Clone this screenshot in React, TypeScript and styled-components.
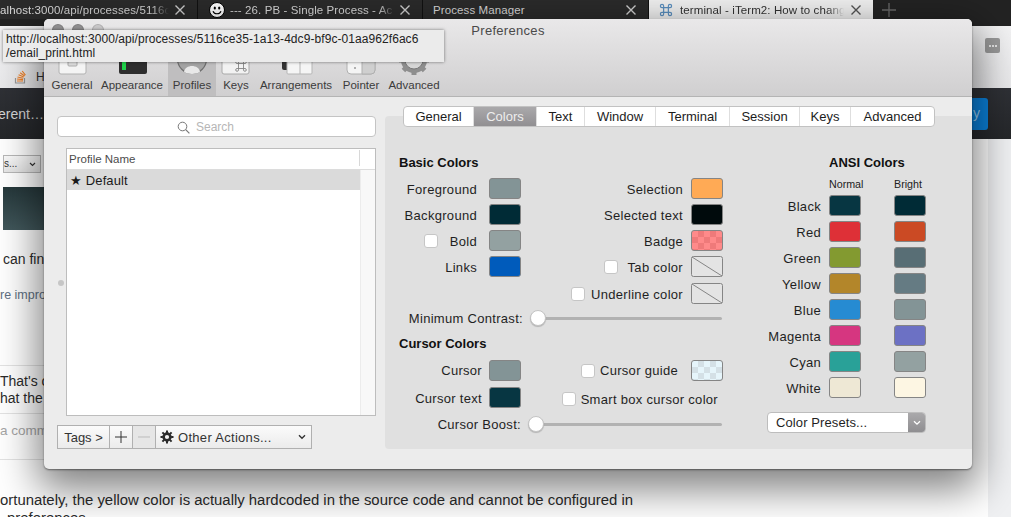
import React from "react";
import styled, { createGlobalStyle } from "styled-components";

const Global = createGlobalStyle`
  html, body { margin: 0; padding: 0; background: #fff; overflow: hidden; }
  #root { width: 1011px; height: 517px; }
  * { box-sizing: border-box; }
`;

const Page = styled.div`
  position: relative;
  width: 1011px;
  height: 517px;
  overflow: hidden;
  background: #fff;
  font-family: "Liberation Sans", Arial, sans-serif;
  display: flex;
  flex-direction: column;
`;

/* ---------- Browser behind the window ---------- */
const TabBar = styled.div`
  height: 26px;
  flex: none;
  background: #232323;
  display: flex;
  align-items: flex-start;
`;
const Tab = styled.div<{ $w: number; $active?: boolean; $pad: number; $gap: number }>`
  width: ${(p) => p.$w}px;
  flex: none;
  height: 19px;
  background: ${(p) => (p.$active ? "#f2f2f2" : "#2b2b2b")};
  color: ${(p) => (p.$active ? "#333" : "#d8d8d8")};
  border-right: ${(p) => (p.$active ? "0" : "1px solid #111")};
  display: flex;
  align-items: center;
  font-size: 11.5px;
  white-space: nowrap;
  overflow: hidden;
  padding-left: ${(p) => p.$pad}px;
  padding-right: 12px;
  gap: ${(p) => p.$gap}px;
  letter-spacing: 0.1px;
`;
const TabText = styled.span<{ $fade?: boolean }>`
  flex: 1;
  min-width: 0;
  ${(p) =>
    p.$fade
      ? `-webkit-mask-image: linear-gradient(to right, #000 90%, transparent 100%);
         mask-image: linear-gradient(to right, #000 90%, transparent 100%);`
      : ""}
`;
const TabClose = styled.svg`
  width: 10px;
  height: 10px;
  flex: none;
`;
const AddTab = styled.svg`
  width: 14px;
  height: 14px;
  margin: 3px 0 0 9px;
`;
const ChromeBar = styled.div`
  height: 62px;
  flex: none;
  background: linear-gradient(#f3f3f4, #e9e9eb);
  position: relative;
`;
const BarMenu = styled.div`
  position: absolute;
  right: 11px;
  top: 12px;
  width: 15px;
  height: 15px;
  background: #9a9a9a;
  border-radius: 2px;
  display: flex;
  align-items: center;
  justify-content: center;
  gap: 1px;
`;
const BarDot = styled.i`
  width: 2px;
  height: 2px;
  background: #fff;
  border-radius: 50%;
`;
const Bookmark = styled.div`
  position: absolute;
  left: 14px;
  top: 43px;
  display: flex;
  align-items: center;
  gap: 9px;
  color: #333;
  font-size: 12px;
`;
const HeaderBand = styled.div`
  height: 51px;
  flex: none;
  background: linear-gradient(#2f3136, #25272a);
  color: #d6d6d6;
  font-size: 14px;
  display: flex;
  align-items: flex-start;
  padding-top: 18px;
  position: relative;
`;
const HeaderText = styled.span`
  margin-left: -2px;
`;
const BlueButton = styled.div`
  position: absolute;
  left: 960px;
  top: 10px;
  width: 28px;
  height: 32px;
  background: #0a7fd8;
  border-radius: 3px;
  color: #9ccdf0;
  font-size: 14px;
  padding: 7px 0 0 13px;
`;
const Content = styled.div`
  position: relative;
  flex: 1;
  display: flex;
  flex-direction: column;
  align-items: flex-start;
  font-size: 14px;
  color: #2b2b2b;
  background: #fff;
`;
const SideRail = styled.div`
  position: absolute;
  right: 0;
  top: 0;
  bottom: 0;
  width: 23px;
  background: #f0f1f3;
`;
const SelectStub = styled.div`
  margin: 16px 0 0 3px;
  width: 38px;
  height: 18px;
  border: 1px solid #b8b8b8;
  background: linear-gradient(#fafafa, #e6e6e6);
  font-size: 10px;
  line-height: 16px;
  padding-right: 4px;
  color: #333;
  display: flex;
  align-items: center;
  justify-content: space-between;
`;
const Thumb = styled.div`
  margin: 14px 0 0 3px;
  width: 41px;
  height: 43px;
  background: linear-gradient(#26383b, #41575b);
`;
const CopyLine = styled.div<{ $top: number; $color?: string; $size?: number; $left?: number }>`
  position: absolute;
  left: ${(p) => p.$left ?? 0}px;
  top: ${(p) => p.$top}px;
  white-space: nowrap;
  color: ${(p) => p.$color ?? "#2b2b2b"};
  font-size: ${(p) => p.$size ?? 14}px;
  line-height: 16px;
`;
const Rule = styled.div<{ $top: number }>`
  position: absolute;
  left: 0;
  width: 44px;
  top: ${(p) => p.$top}px;
  height: 1px;
  background: #e3e3e3;
`;

/* ---------- Preferences window ---------- */
const Window = styled.div`
  position: absolute;
  left: 44px;
  top: 19px;
  width: 928px;
  height: 450px;
  border-radius: 5px;
  background: #ececec;
  box-shadow: 0 1px 2px rgba(0, 0, 0, 0.45), 0 14px 40px 6px rgba(0, 0, 0, 0.5);
  display: flex;
  flex-direction: column;
  overflow: hidden;
`;
const TitleBar = styled.div`
  height: 78px;
  flex: none;
  background: linear-gradient(#e9e8e9, #d0cfd0);
  border-bottom: 1px solid #b4b4b4;
  position: relative;
  display: flex;
  flex-direction: column;
  align-items: center;
`;
const TitleText = styled.div`
  font-size: 13px;
  color: #4a4a4a;
  margin-top: 4px;
  line-height: 16px;
  letter-spacing: 0.3px;
`;
const Lights = styled.div`
  position: absolute;
  left: 8px;
  top: 5px;
  display: flex;
  gap: 8px;
`;
const Light = styled.i<{ $c: string }>`
  width: 12px;
  height: 12px;
  border-radius: 50%;
  background: ${(p) => p.$c};
  border: 1px solid rgba(0, 0, 0, 0.12);
`;
const ToolRow = styled.div`
  position: absolute;
  left: 4px;
  bottom: 0;
  height: 60px;
  display: flex;
`;
const Tool = styled.div<{ $active?: boolean; $w: number }>`
  width: ${(p) => p.$w}px;
  height: 60px;
  flex: none;
  display: flex;
  flex-direction: column;
  align-items: center;
  justify-content: flex-end;
  gap: 1px;
  padding-bottom: 3px;
  font-size: 11.5px;
  line-height: 16px;
  color: #3b3b3b;
  background: ${(p) => (p.$active ? "#bfbebf" : "transparent")};
`;
const ToolIcon = styled.svg`
  width: 40px;
  height: 32px;
  flex: none;
`;

const Body = styled.div`
  flex: 1;
  display: flex;
  padding: 19px 19px 0 13px;
  gap: 9px;
`;

/* left column */
const LeftCol = styled.div`
  width: 319px;
  flex: none;
  display: flex;
  flex-direction: column;
`;
const SearchBox = styled.div`
  height: 21px;
  background: #fff;
  border: 1px solid #c4c4c4;
  border-radius: 4px;
  display: flex;
  align-items: center;
  justify-content: center;
  gap: 6px;
  font-size: 12px;
  line-height: 21px;
  color: #b6b6b6;
  padding: 1px 22px 0 0;
`;
const ListWrap = styled.div`
  display: flex;
  margin-top: 11px;
  position: relative;
`;
const Grip = styled.i`
  position: absolute;
  left: 1px;
  top: 132px;
  width: 6px;
  height: 6px;
  border-radius: 50%;
  background: #c6c6c6;
`;
const ProfileTable = styled.div`
  margin-left: 9px;
  width: 310px;
  height: 268px;
  border: 1px solid #bdbdbd;
  background: #fff;
  display: flex;
  flex-direction: column;
`;
const ProfileHead = styled.div`
  height: 21px;
  flex: none;
  border-bottom: 1px solid #dcdcdc;
  font-size: 11.5px;
  color: #4c4c4c;
  line-height: 20px;
  padding-left: 2px;
  position: relative;
`;
const HeadDivider = styled.i`
  position: absolute;
  right: 15px;
  top: 1px;
  bottom: 3px;
  width: 1px;
  background: #d8d8d8;
`;
const ProfileBody = styled.div`
  flex: 1;
  display: flex;
`;
const ProfileRows = styled.div`
  flex: 1;
  display: flex;
  flex-direction: column;
`;
const ProfileRow = styled.div`
  height: 20px;
  background: #dadada;
  font-size: 13px;
  line-height: 22px;
  padding-left: 3px;
  color: #1a1a1a;
  letter-spacing: 0.1px;
`;
const Scroll = styled.div`
  width: 15px;
  flex: none;
  background: #f8f8f8;
  border-left: 1px solid #ececec;
`;
const BottomBar = styled.div`
  margin-top: 9px;
  width: 255px;
  height: 24px;
  display: flex;
  border: 1px solid #b0b0b0;
  background: linear-gradient(#fbfbfb, #ebebeb);
  font-size: 13px;
  color: #333;
`;
const BarCell = styled.div<{ $w: number; $dim?: boolean }>`
  width: ${(p) => p.$w}px;
  flex: none;
  border-right: 1px solid #b0b0b0;
  display: flex;
  align-items: center;
  justify-content: center;
  color: #333;
  background: ${(p) => (p.$dim ? "#e6e6e6" : "transparent")};
`;
const ActionCell = styled.div`
  flex: 1;
  display: flex;
  align-items: center;
  padding: 0 5px 0 4px;
  gap: 4px;
  letter-spacing: 0.3px;
`;
const ActionText = styled.span`
  flex: 1;
`;
const Glyph = styled.svg`
  flex: none;
`;

/* right column */
const RightCol = styled.div`
  flex: 1;
  position: relative;
  display: flex;
  flex-direction: column;
`;
const TabsRow = styled.div`
  position: absolute;
  left: 18px;
  top: -10px;
  height: 21px;
  display: flex;
  background: #fff;
  border: 1px solid #c2c2c2;
  border-radius: 4px;
  font-size: 13px;
  overflow: hidden;
  z-index: 1;
`;
const PrefTab = styled.div<{ $w: number; $active?: boolean }>`
  width: ${(p) => p.$w}px;
  flex: none;
  text-align: center;
  line-height: 19px;
  color: ${(p) => (p.$active ? "#eee" : "#1c1c1c")};
  background: ${(p) => (p.$active ? "linear-gradient(#aaa9ab, #918f92)" : "transparent")};
  border-right: 1px solid #dedede;
  &:last-child { border-right: 0; }
`;
const Panel = styled.div`
  height: 333px;
  background: #e0e0e0;
  border-radius: 4px;
  padding: 39px 27px 0 14px;
  display: grid;
  grid-template-columns: 338px 1fr;
  font-size: 13px;
  color: #1f1f1f;
`;
const Main = styled.div`
  display: flex;
  flex-direction: column;
`;
const Heading = styled.div<{ $mt?: number }>`
  font-weight: 700;
  font-size: 13px;
  color: #111;
  line-height: 16px;
  margin-top: ${(p) => p.$mt ?? 0}px;
`;
const BasicGrid = styled.div`
  margin-top: 7px;
  display: grid;
  grid-template-columns: 122px 1fr;
  grid-auto-rows: 26px;
`;
const Row = styled.div<{ $w: number; $mt?: number }>`
  width: ${(p) => p.$w}px;
  height: 21px;
  margin-top: ${(p) => p.$mt ?? 0}px;
  display: flex;
  align-items: center;
  justify-content: flex-end;
  white-space: nowrap;
`;
const SmartRow = styled(Row)`
  padding-top: 3px;
`;
const Label = styled.span<{ $mr?: number; $drop?: number }>`
  line-height: 21px;
  letter-spacing: 0.3px;
  padding-top: ${(p) => p.$drop ?? 2}px;
  margin-right: ${(p) => p.$mr ?? 0}px;
`;
const Swatch = styled.div<{ $c: string }>`
  width: 32px;
  height: 21px;
  flex: none;
  background: ${(p) => p.$c};
  border: 1px solid #858585;
  border-radius: 3px;
`;
const CheckSwatch = styled(Swatch)<{ $b: string }>`
  background-image: conic-gradient(${(p) => p.$b} 25%, transparent 0 50%, ${(p) => p.$b} 0 75%, transparent 0);
  background-size: 12px 12px;
`;
const NoColor = styled.svg`
  width: 32px;
  height: 21px;
  flex: none;
`;
const Check = styled.i<{ $mr: number }>`
  width: 14px;
  height: 14px;
  flex: none;
  background: #fff;
  border: 1px solid #c6c6c6;
  border-radius: 3px;
  margin-right: ${(p) => p.$mr}px;
`;
const Slider = styled.div<{ $mt: number }>`
  width: 323px;
  margin-top: ${(p) => p.$mt}px;
  display: flex;
  align-items: center;
  height: 16px;
  white-space: nowrap;
  justify-content: flex-end;
  gap: 7px;
`;
const Track = styled.div<{ $w: number }>`
  width: ${(p) => p.$w}px;
  height: 3px;
  background: #b2b2b2;
  border-radius: 2px;
  display: flex;
  align-items: center;
`;
const Knob = styled.i`
  width: 16px;
  height: 16px;
  border-radius: 50%;
  background: #fff;
  border: 1px solid #c4c4c4;
  box-shadow: 0 1px 1px rgba(0, 0, 0, 0.2);
  flex: none;
`;
const CursorGrid = styled.div`
  margin-top: 8px;
  display: grid;
  grid-template-columns: 122px 1fr;
  grid-template-rows: 27px 27px;
`;
const Ansi = styled.div`
  display: flex;
  flex-direction: column;
  padding-left: 92px;
`;
const AnsiHeading = styled(Heading)`
  white-space: nowrap;
`;
const AnsiHead = styled.div`
  display: flex;
  font-size: 10.7px;
  line-height: 14px;
  color: #222;
  margin-top: 6px;
  height: 18px;
`;
const AnsiHeadCell = styled.span`
  width: 65px;
  flex: none;
`;
const AnsiRow = styled.div`
  height: 26px;
  display: flex;
  align-items: flex-start;
  margin-left: -62px;
`;
const AnsiLabel = styled.span`
  width: 54px;
  text-align: right;
  line-height: 23px;
  margin-right: 8px;
  letter-spacing: 0.3px;
`;
const AnsiGap = styled.i`
  width: 33px;
  flex: none;
`;
const Presets = styled.div`
  margin: 9px 0 0 -62px;
  width: 159px;
  height: 21px;
  flex: none;
  background: #fff;
  border: 1px solid #bdbdbd;
  border-radius: 4px;
  display: flex;
  align-items: center;
  justify-content: space-between;
  padding-left: 8px;
  font-size: 13px;
  overflow: hidden;
  letter-spacing: 0.1px;
`;
const PresetArrow = styled.div`
  width: 17px;
  align-self: stretch;
  background: linear-gradient(#aaa9ab, #8f8e91);
  display: flex;
  align-items: center;
  justify-content: center;
`;

/* tooltip */
const Tip = styled.div`
  position: absolute;
  left: 3px;
  top: 30px;
  width: 441px;
  height: 32px;
  background: #ebebeb;
  box-shadow: 0 0 3px rgba(0, 0, 0, 0.5);
  font-size: 12px;
  line-height: 14px;
  padding: 2px 3px;
  color: #222;
  letter-spacing: 0.07px;
`;

const X = ({ c }: { c: string }) => (
  <TabClose viewBox="0 0 10 10">
    <path d="M0.5 0.5L9.5 9.5M9.5 0.5L0.5 9.5" stroke={c} strokeWidth="1.4" />
  </TabClose>
);

const ansi: [string, string, string][] = [
  ["Black", "#073642", "#002b36"],
  ["Red", "#de3037", "#cb4a24"],
  ["Green", "#839a30", "#586e75"],
  ["Yellow", "#b3862a", "#657b83"],
  ["Blue", "#268bd2", "#839496"],
  ["Magenta", "#d63680", "#6c71c4"],
  ["Cyan", "#29a198", "#93a1a1"],
  ["White", "#eee8d5", "#fdf6e3"],
];

const NoSwatch = () => (
  <NoColor viewBox="0 0 32 21">
    <rect x="0.5" y="0.5" width="31" height="20" rx="2" fill="#e4e4e4" stroke="#858585" />
    <path d="M1 1L31 20" stroke="#858585" strokeWidth="1" />
  </NoColor>
);

export default function App() {
  return (
    <Page>
      <Global />
      <TabBar>
        <Tab $w={198} $pad={0} $gap={6}>
          <TabText $fade>alhost:3000/api/processes/5116c</TabText>
          <X c="#d0d0d0" />
        </Tab>
        <Tab $w={225} $pad={11} $gap={5}>
          <Glyph width="16" height="16" viewBox="0 0 16 16">
            <circle cx="8" cy="8" r="7.5" fill="#fff" stroke="#000" />
            <ellipse cx="5.8" cy="6" rx="1.1" ry="1.5" fill="#000" />
            <ellipse cx="10.2" cy="6" rx="1.1" ry="1.5" fill="#000" />
            <path d="M4 9.2C5.5 12.6 10.5 12.6 12 9.2" fill="none" stroke="#000" strokeWidth="1.2" />
          </Glyph>
          <TabText $fade>--- 26. PB - Single Process - Ac</TabText>
          <X c="#d0d0d0" />
        </Tab>
        <Tab $w={226} $pad={10} $gap={6}>
          <TabText>Process Manager</TabText>
          <X c="#d0d0d0" />
        </Tab>
        <Tab $w={224} $pad={10} $gap={7} $active>
          <Glyph width="14" height="14" viewBox="0 0 13 13">
            <path d="M4.3 4.3H8.7V8.7H4.3ZM4.3 4.3H2.8A1.5 1.5 0 1 1 4.3 2.8ZM8.7 4.3V2.8A1.5 1.5 0 1 1 10.2 4.3ZM8.7 8.7H10.2A1.5 1.5 0 1 1 8.7 10.2ZM4.3 8.7V10.2A1.5 1.5 0 1 1 2.8 8.7Z" fill="none" stroke="#5a8fc0" strokeWidth="1.1" />
          </Glyph>
          <TabText $fade>terminal - iTerm2: How to chang</TabText>
          <X c="#555" />
        </Tab>
        <AddTab viewBox="0 0 14 14">
          <path d="M7 0V14M0 7H14" stroke="#6a6a6a" strokeWidth="1.3" />
        </AddTab>
      </TabBar>
      <ChromeBar>
        <BarMenu>
          <BarDot />
          <BarDot />
          <BarDot />
        </BarMenu>
        <Bookmark>
          <Glyph width="13" height="15" viewBox="0 0 13 15">
            <path d="M1.5 9V14H10.5V9" fill="none" stroke="#999" strokeWidth="1.2" />
            <path d="M3 12H9M3 10L9 10.6M3.5 8L9.3 9.2M4.6 5.8L9.8 8M6.2 3.8L10.6 7M8.2 2L11.4 6.2" stroke="#f48024" strokeWidth="1.1" />
          </Glyph>
          <span>H</span>
        </Bookmark>
      </ChromeBar>
      <HeaderBand>
        <HeaderText>erent…</HeaderText>
        <BlueButton>y</BlueButton>
      </HeaderBand>
      <Content>
        <SideRail />
        <SelectStub>
          <span>s...</span>
          <Glyph width="7" height="5" viewBox="0 0 8 6">
            <path d="M1 1.2L4 4.2L7 1.2" fill="none" stroke="#333" strokeWidth="1.4" />
          </Glyph>
        </SelectStub>
        <Thumb />
        <CopyLine $top={112} $left={3}>can fin</CopyLine>
        <CopyLine $top={148} $color="#5f7183" $size={12.5}>re impro</CopyLine>
        <Rule $top={226} />
        <CopyLine $top={234}>That's or</CopyLine>
        <CopyLine $top={251}>hat the y</CopyLine>
        <Rule $top={274} />
        <CopyLine $top={284} $color="#a5a5a5" $size={13.5}>a comm</CopyLine>
        <Rule $top={320} />
        <CopyLine $top={353} $size={14.9}>ortunately, the yellow color is actually hardcoded in the source code and cannot be configured in</CopyLine>
        <CopyLine $top={371} $left={7} $size={14.9}>preferences</CopyLine>
      </Content>

      <Window>
        <TitleBar>
          <Lights>
            <Light $c="#8f8e8f" />
            <Light $c="#8f8e8f" />
            <Light $c="#c8c7c8" />
          </Lights>
          <TitleText>Preferences</TitleText>
          <ToolRow>
            <Tool $w={48}>
              <ToolIcon viewBox="0 -8 40 32">
                <rect x="7" y="-8" width="27" height="30" rx="2" fill="#f4f4f4" stroke="#b2b2b2" />
                <rect x="16" y="6" width="9" height="8" rx="1" fill="#ddd" stroke="#aaa" />
              </ToolIcon>
              General
            </Tool>
            <Tool $w={72}>
              <ToolIcon viewBox="0 -8 40 32">
                <rect x="7" y="-8" width="28" height="30" rx="2" fill="#2e2e2e" />
                <rect x="10" y="10" width="4" height="8" fill="#1fd14a" />
              </ToolIcon>
              Appearance
            </Tool>
            <Tool $w={48} $active>
              <ToolIcon viewBox="0 -8 40 32">
                <circle cx="20" cy="7" r="14.5" fill="#a3a3a3" stroke="#6f6f6f" strokeWidth="1.2" />
                <path d="M12 20C13 12 27 12 28 20C24 22.5 16 22.5 12 20Z" fill="#e8e8e8" />
              </ToolIcon>
              Profiles
            </Tool>
            <Tool $w={40}>
              <ToolIcon viewBox="0 -8 40 32">
                <rect x="6" y="-8" width="27" height="30" rx="2" fill="#f2f2f2" stroke="#aaa" />
                <path d="M22.5 11.5H27.5V16.5H22.5ZM22.5 11.5H21A1.4 1.4 0 1 1 22.5 10.1ZM27.5 11.5V10.1A1.4 1.4 0 1 1 29 11.5ZM27.5 16.5H29A1.4 1.4 0 1 1 27.5 17.9ZM22.5 16.5V17.9A1.4 1.4 0 1 1 21 16.5Z" fill="none" stroke="#777" strokeWidth="0.8" />
              </ToolIcon>
              Keys
            </Tool>
            <Tool $w={80}>
              <ToolIcon viewBox="0 -8 40 32">
                <rect x="6" y="-8" width="8" height="26" rx="2" fill="#333" />
                <rect x="11" y="-8" width="25" height="30" rx="1" fill="#f5f5f5" stroke="#b5b5b5" />
                <path d="M24 -8V22" stroke="#b5b5b5" />
              </ToolIcon>
              Arrangements
            </Tool>
            <Tool $w={50}>
              <ToolIcon viewBox="0 -8 40 32">
                <rect x="6" y="-8" width="28" height="30" rx="4" fill="#f4f4f4" stroke="#b0b0b0" />
                <path d="M21 -8H30A4 4 0 0 1 34 -4V18A4 4 0 0 1 30 22H21Z" fill="#cfcfcf" stroke="#b0b0b0" />
                <circle cx="14" cy="16" r="1" fill="#999" />
              </ToolIcon>
              Pointer
            </Tool>
            <Tool $w={56}>
              <ToolIcon viewBox="0 -8 40 32">
                <path d="M20 8m-13 0a13 13 0 1 0 26 0a13 13 0 1 0 -26 0" fill="#8e8e8e" />
                <path d="M20 -7V23M5 8H35M9.4 -2.6L30.6 18.6M30.6 -2.6L9.4 18.6" stroke="#8e8e8e" strokeWidth="5" />
                <circle cx="20" cy="8" r="9" fill="#d6d6d6" stroke="#7a7a7a" />
              </ToolIcon>
              Advanced
            </Tool>
          </ToolRow>
        </TitleBar>
        <Body>
          <LeftCol>
            <SearchBox>
              <Glyph width="13" height="13" viewBox="0 0 13 13">
                <circle cx="5.5" cy="5.5" r="4.3" fill="none" stroke="#777" strokeWidth="1" />
                <path d="M8.7 8.7L12.4 12.4" stroke="#777" strokeWidth="1.2" />
              </Glyph>
              Search
            </SearchBox>
            <ListWrap>
              <Grip />
              <ProfileTable>
                <ProfileHead>
                  Profile Name
                  <HeadDivider />
                </ProfileHead>
                <ProfileBody>
                  <ProfileRows>
                    <ProfileRow>★ Default</ProfileRow>
                  </ProfileRows>
                  <Scroll />
                </ProfileBody>
              </ProfileTable>
            </ListWrap>
            <BottomBar>
              <BarCell $w={52}>Tags &gt;</BarCell>
              <BarCell $w={23}>
                <Glyph width="12" height="12" viewBox="0 0 12 12">
                  <path d="M6 0V12M0 6H12" stroke="#333" />
                </Glyph>
              </BarCell>
              <BarCell $w={23} $dim>
                <Glyph width="12" height="12" viewBox="0 0 12 12">
                  <path d="M0 6H12" stroke="#bbb" />
                </Glyph>
              </BarCell>
              <ActionCell>
                <Glyph width="14" height="14" viewBox="0 0 14 14">
                  <circle cx="7" cy="7" r="3.4" fill="none" stroke="#2a2a2a" strokeWidth="2.6" />
                  <path d="M7 0.5V13.5M0.5 7H13.5M2.4 2.4L11.6 11.6M11.6 2.4L2.4 11.6" stroke="#2a2a2a" strokeWidth="2" strokeDasharray="2.4 8.2 2.4" />
                </Glyph>
                <ActionText>Other Actions...</ActionText>
                <Glyph width="8" height="6" viewBox="0 0 8 6">
                  <path d="M1 1.2L4 4.2L7 1.2" fill="none" stroke="#333" strokeWidth="1.4" />
                </Glyph>
              </ActionCell>
            </BottomBar>
          </LeftCol>
          <RightCol>
            <TabsRow>
              <PrefTab $w={70}>General</PrefTab>
              <PrefTab $w={63} $active>Colors</PrefTab>
              <PrefTab $w={48}>Text</PrefTab>
              <PrefTab $w={71}>Window</PrefTab>
              <PrefTab $w={74}>Terminal</PrefTab>
              <PrefTab $w={70}>Session</PrefTab>
              <PrefTab $w={51}>Keys</PrefTab>
              <PrefTab $w={83}>Advanced</PrefTab>
            </TabsRow>
            <Panel>
              <Main>
                <Heading>Basic Colors</Heading>
                <BasicGrid>
                  <Row $w={122}><Label $mr={12}>Foreground</Label><Swatch $c="#839496" /></Row>
                  <Row $w={202}><Label $mr={8}>Selection</Label><Swatch $c="#ffaa55" /></Row>
                  <Row $w={122}><Label $mr={12}>Background</Label><Swatch $c="#002b36" /></Row>
                  <Row $w={202}><Label $mr={8}>Selected text</Label><Swatch $c="#000a0c" /></Row>
                  <Row $w={122}><Check $mr={12} /><Label $mr={12}>Bold</Label><Swatch $c="#93a1a1" /></Row>
                  <Row $w={202}><Label $mr={8}>Badge</Label><CheckSwatch $c="#ff8a8a" $b="#ef7a7a" /></Row>
                  <Row $w={122}><Label $mr={12}>Links</Label><Swatch $c="#005bbb" /></Row>
                  <Row $w={202}><Check $mr={10} /><Label $mr={8}>Tab color</Label><NoSwatch /></Row>
                </BasicGrid>
                <Row $w={324} $mt={1}>
                  <Check $mr={6} />
                  <Label $mr={8}>Underline color</Label>
                  <NoSwatch />
                </Row>
                <Slider $mt={6}>
                  <Label $drop={0}>Minimum Contrast:</Label>
                  <Track $w={192}><Knob /></Track>
                </Slider>
                <Heading $mt={10}>Cursor Colors</Heading>
                <CursorGrid>
                  <Row $w={122}>
                    <Label $mr={7} $drop={0}>Cursor</Label>
                    <Swatch $c="#839496" />
                  </Row>
                  <Row $w={202}>
                    <Check $mr={5} />
                    <Label $mr={13} $drop={0}>Cursor guide</Label>
                    <CheckSwatch $c="#e6f5fb" $b="#d4e0e6" />
                  </Row>
                  <Row $w={122}>
                    <Label $mr={7}>Cursor text</Label>
                    <Swatch $c="#073642" />
                  </Row>
                  <SmartRow $w={197}>
                    <Check $mr={5} />
                    <Label $drop={0}>Smart box cursor color</Label>
                  </SmartRow>
                </CursorGrid>
                <Slider $mt={2}>
                  <Label $drop={0}>Cursor Boost:</Label>
                  <Track $w={194}><Knob /></Track>
                </Slider>
              </Main>
              <Ansi>
                <AnsiHeading>ANSI Colors</AnsiHeading>
                <AnsiHead>
                  <AnsiHeadCell>Normal</AnsiHeadCell>
                  <AnsiHeadCell>Bright</AnsiHeadCell>
                </AnsiHead>
                {ansi.map(([n, a, b]) => (
                  <AnsiRow key={n}>
                    <AnsiLabel>{n}</AnsiLabel>
                    <Swatch $c={a} />
                    <AnsiGap />
                    <Swatch $c={b} />
                  </AnsiRow>
                ))}
                <Presets>
                  Color Presets...
                  <PresetArrow>
                    <Glyph width="8" height="6" viewBox="0 0 8 6">
                      <path d="M1 1.2L4 4.2L7 1.2" fill="none" stroke="#fff" strokeWidth="1.3" />
                    </Glyph>
                  </PresetArrow>
                </Presets>
              </Ansi>
            </Panel>
          </RightCol>
        </Body>
      </Window>

      <Tip>
        http://localhost:3000/api/processes/5116ce35-1a13-4dc9-bf9c-01aa962f6ac6
        <br />
        /email_print.html
      </Tip>
    </Page>
  );
}
